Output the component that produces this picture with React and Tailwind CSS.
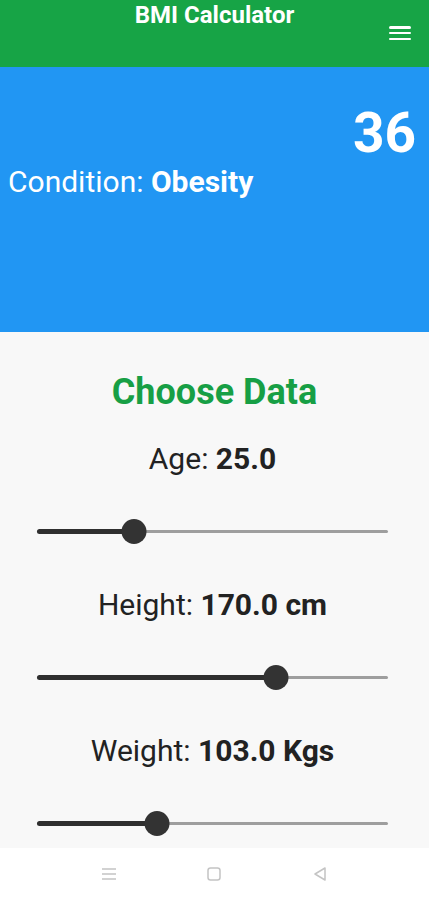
import React from 'react';

const Slider = ({ value }) => {
    const pct = `${value * 100}%`;
    return (
        <div className="h-[73px] shrink-0 flex items-center pl-[37px]">
            <div className="relative w-[351px] h-[12px] flex items-center">
                <div className="absolute left-0 right-0 h-[3px] rounded-full bg-[#9e9e9e]" />
                <div className="absolute left-0 h-[5px] rounded-full bg-[#2f2f2f]" style={{ width: pct }} />
                <div
                    className="absolute w-[25px] h-[25px] rounded-full bg-[#333333] -translate-x-1/2"
                    style={{ left: pct }}
                />
            </div>
        </div>
    );
};

const Label = ({ name, value }) => (
    <div className="h-[73px] shrink-0 flex items-center justify-center pr-[4px] text-[30px] text-[#222]">
        <span>{name}:&nbsp;</span>
        <span className="font-bold">{value}</span>
    </div>
);

export default function App() {
    return (
        <div className="w-[429px] h-[900px] flex flex-col overflow-hidden font-['Roboto','Liberation_Sans',sans-serif]">
            {/* App bar */}
            <header className="relative h-[67px] shrink-0 bg-[#17a446] text-white flex justify-center">
                <h1 className="text-[24px] leading-[30px] font-bold">BMI Calculator</h1>
                <button className="absolute right-[18px] top-[26px] w-[22px] h-[14px] flex flex-col justify-between">
                    <span className="block h-[2.5px] w-full bg-white rounded" />
                    <span className="block h-[2.5px] w-full bg-white rounded" />
                    <span className="block h-[2.5px] w-full bg-white rounded" />
                </button>
            </header>

            {/* Result */}
            <section className="h-[265px] shrink-0 bg-[#2196f3] text-white flex flex-col px-[8px] pt-[36px]">
                <div className="self-end pr-[5px] text-[55px] leading-[60px] font-bold">36</div>
                <div className="mt-[2px] text-[30px] leading-[34px]">
                    Condition: <span className="font-bold">Obesity</span>
                </div>
            </section>

            {/* Inputs */}
            <main className="h-[516px] shrink-0 bg-[#f8f8f8] overflow-hidden flex flex-col pt-[30px]">
                <h2 className="h-[60px] shrink-0 flex items-center justify-center text-[36px] font-bold text-[#179f45]">
                    Choose Data
                </h2>
                <Label name="Age" value="25.0" />
                <Slider value={0.276} />
                <Label name="Height" value="170.0 cm" />
                <Slider value={0.681} />
                <Label name="Weight" value="103.0 Kgs" />
                <Slider value={0.342} />
            </main>

            {/* System navigation */}
            <nav className="h-[52px] shrink-0 bg-white flex items-center justify-around px-[56px] text-[#c4c4c4]">
                <svg width="16" height="14" viewBox="0 0 16 14" fill="none" stroke="currentColor" strokeWidth="1.5">
                    <path d="M1 2h14M1 7h14M1 12h14" />
                </svg>
                <svg width="16" height="16" viewBox="0 0 16 16" fill="none" stroke="currentColor" strokeWidth="1.5">
                    <rect x="2" y="2" width="12" height="12" rx="2.5" />
                </svg>
                <svg width="16" height="16" viewBox="0 0 16 16" fill="none" stroke="currentColor" strokeWidth="1.5">
                    <path d="M13 2 L3 8 L13 14 Z" strokeLinejoin="round" />
                </svg>
            </nav>
        </div>
    );
}
